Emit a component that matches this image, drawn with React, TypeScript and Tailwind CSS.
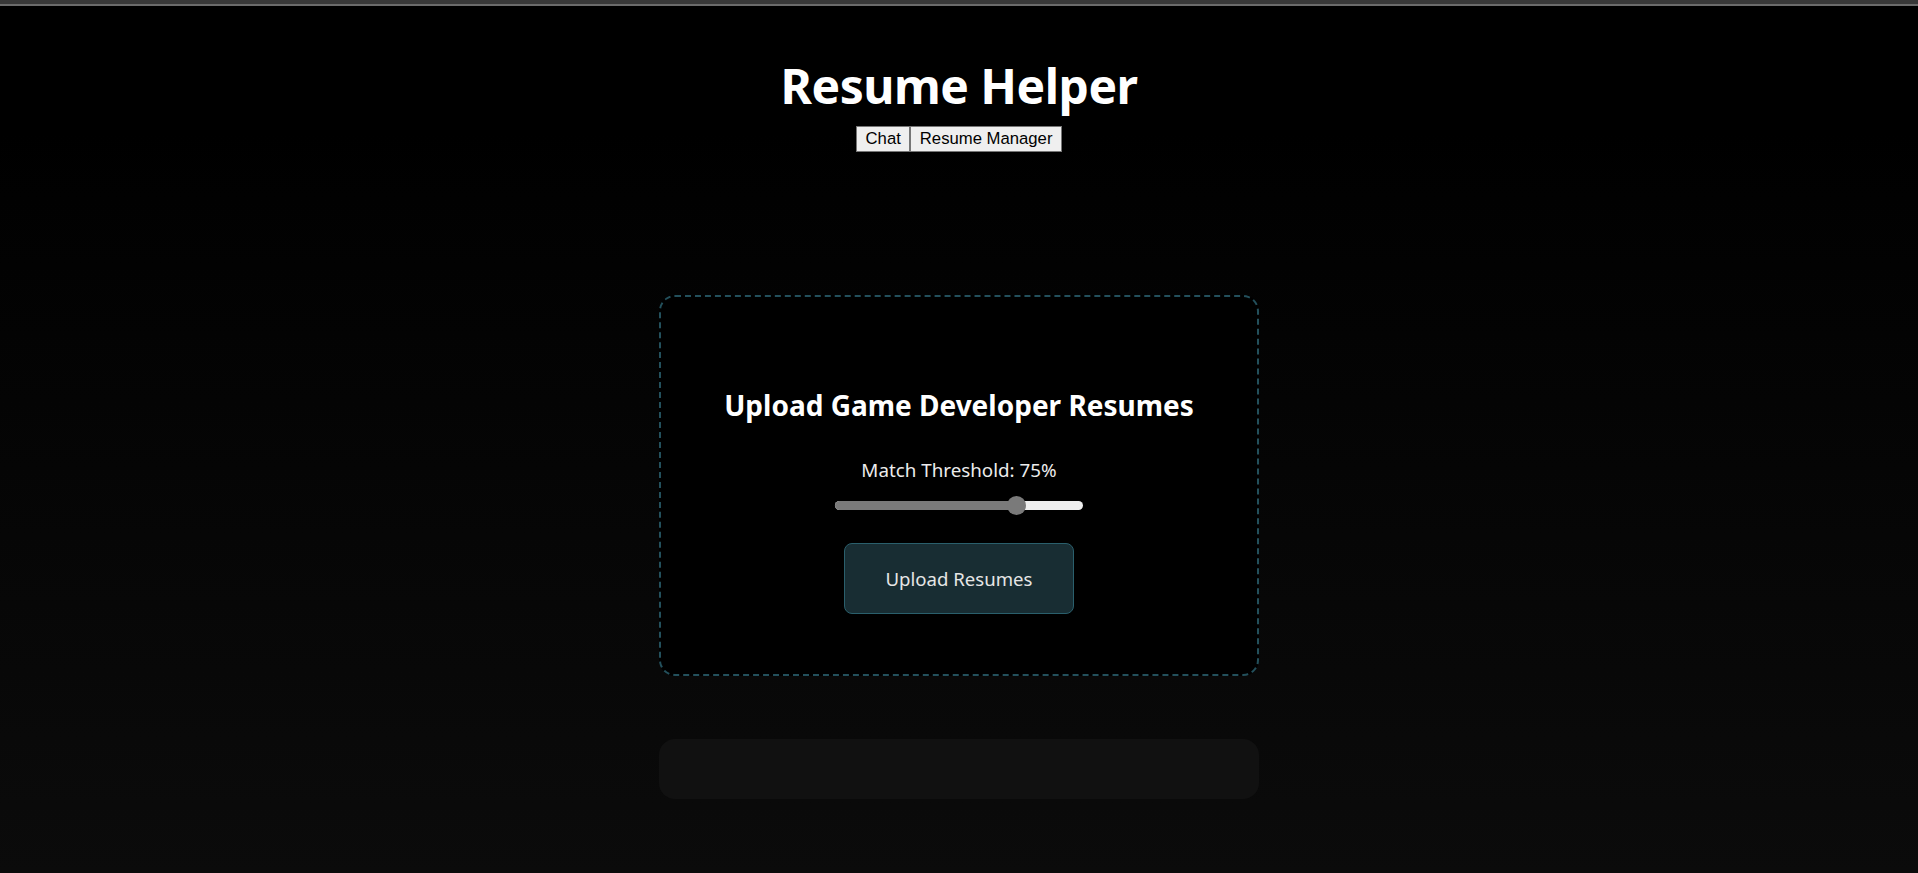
import React from "react";

export default function App() {
  const value = 75;
  const trackW = 248;
  const thumb = 19;
  const thumbLeft = (trackW - thumb) * (value / 100);
  return (
    <div
      className="min-h-[873px] w-full flex flex-col bg-[linear-gradient(to_bottom,#000000_15%,#0b0b0b_100%)]"
      style={{ fontFamily: '"Segoe UI", "Noto Sans", "Open Sans", sans-serif' }}
    >
      <div className="h-[4px] w-full bg-[#383838]" />
      <div className="h-[2px] w-full bg-[#6b6b6b]" />

      <header className="flex flex-col items-center pt-[48px]">
        <h1 className="text-[48px] font-bold leading-[64px] text-white tracking-[-0.5px]">
          Resume Helper
        </h1>
        <nav
          className="flex mt-[8px]"
          style={{ fontFamily: '"Liberation Sans", Arial, sans-serif' }}
        >
          <button className="h-[26px] px-[8.5px] text-[16.7px] leading-none text-black bg-[#efefef] border border-[#767676]">
            Chat
          </button>
          <button className="h-[26px] px-[8.5px] text-[16.7px] leading-none text-black bg-[#efefef] border border-[#767676]">
            Resume Manager
          </button>
        </nav>
      </header>

      <main className="flex flex-col items-center mt-[143px]">
        <section className="w-[600px] h-[381px] rounded-[16px] border-2 border-dashed border-[#23505c] bg-black flex flex-col items-center pt-[90px]">
          <h2 className="text-[28px] font-bold leading-[36px] text-white">
            Upload Game Developer Resumes
          </h2>
          <div className="mt-[35px] text-[18.8px] leading-[24px] text-[#ececec]">
            Match Threshold: {value}%
          </div>
          <div className="relative mt-[14px] h-[19px]" style={{ width: trackW }}>
            <div className="absolute left-0 right-0 top-[5px] h-[9px] rounded-full bg-[#efefef]" />
            <div
              className="absolute left-0 top-[5px] h-[9px] rounded-l-full bg-[#7a7a7a]"
              style={{ width: thumbLeft + thumb / 2 }}
            />
            <div
              className="absolute top-0 h-[19px] w-[19px] rounded-full bg-[#7a7a7a]"
              style={{ left: thumbLeft }}
            />
          </div>
          <button className="mt-[28px] w-[230px] h-[71px] rounded-[8px] border border-[#2a5f6c] bg-[#182d33] text-[18.6px] text-[#e6e6e6]">
            Upload Resumes
          </button>
        </section>

        <div className="mt-[63px] w-[600px] h-[60px] rounded-[16px] bg-[#111111]" />
      </main>
    </div>
  );
}
